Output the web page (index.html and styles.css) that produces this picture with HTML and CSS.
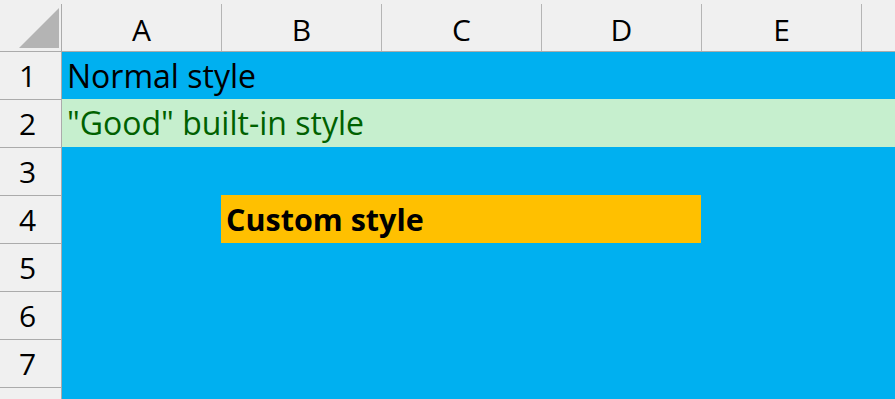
FILE: index.html
```html
<!DOCTYPE html>
<html lang="en">
<head>
<meta charset="utf-8">
<title>Cell styles</title>
<link rel="stylesheet" href="styles.css">
</head>
<body>
<div class="sheet">
  <div class="head">
    <div class="corner">
      <svg class="corner-tri" width="40" height="40" viewBox="0 0 40 40"><polygon points="40,0 40,40 0,40" fill="#b4b4b4"/></svg>
    </div>
    <div class="col">A</div>
    <div class="col">B</div>
    <div class="col">C</div>
    <div class="col">D</div>
    <div class="col">E</div>
    <div class="col col-rest"></div>
  </div>
  <div class="body">
    <div class="rownums">
      <div class="rn">1</div>
      <div class="rn">2</div>
      <div class="rn">3</div>
      <div class="rn">4</div>
      <div class="rn">5</div>
      <div class="rn">6</div>
      <div class="rn">7</div>
      <div class="rn"></div>
    </div>
    <div class="cells">
      <div class="row row-first"><span class="txt">Normal style</span></div>
      <div class="row row-good"><span class="txt">"Good" built-in style</span></div>
      <div class="row"></div>
      <div class="row"><div class="custom"><span class="txt">Custom style</span></div></div>
      <div class="row"></div>
      <div class="row"></div>
      <div class="row"></div>
      <div class="row"></div>
    </div>
  </div>
</div>
</body>
</html>
```

FILE: styles.css
```css
* { box-sizing: border-box; }
html, body {
  margin: 0;
  padding: 0;
  background: #f0f0f0;
  overflow: hidden;
}
.sheet {
  width: 895px;
  height: 399px;
  overflow: hidden;
  font-family: "Open Sans", "Liberation Sans", sans-serif;
  color: #000;
}
.head {
  display: flex;
  height: 52px;
  padding-top: 4px;
  border-bottom: 1px solid #ababab;
  background: #f0f0f0;
}
.corner {
  flex: 0 0 62px;
  height: 47px;
  border-right: 1px solid #ababab;
  display: flex;
  justify-content: flex-end;
  align-items: flex-end;
  padding: 0 2px 3px 0;
}
.corner-tri { display: block; }
.col {
  flex: 0 0 160px;
  height: 47px;
  border-right: 1px solid #b5b5b5;
  display: flex;
  justify-content: center;
  align-items: flex-end;
  font-size: 30px;
  line-height: 30px;
  padding-bottom: 6px;
}
.col-rest { flex: 1 0 40px; border-right: none; }
.body {
  display: flex;
}
.rownums {
  flex: 0 0 62px;
  border-right: 1px solid #ababab;
  background: #f0f0f0;
}
.rn {
  height: 48px;
  border-bottom: 1px solid #ababab;
  display: flex;
  justify-content: center;
  align-items: flex-end;
  padding-right: 6px;
  padding-bottom: 8px;
  font-size: 30px;
  line-height: 30px;
}
.cells {
  flex: 1 1 auto;
  background: #00b0f0;
}
.row {
  height: 48px;
  display: flex;
  align-items: flex-end;
  padding-left: 5px;
  padding-bottom: 8px;
  font-size: 32px;
  line-height: 32px;
  white-space: nowrap;
}
.row-first { height: 47px; padding-bottom: 7px; }
.row-good {
  background: #c6efce;
  color: #006100;
}
.custom {
  margin-left: 154px;
  margin-bottom: -8px;
  width: 480px;
  height: 48px;
  background: #ffc000;
  display: flex;
  align-items: flex-end;
  padding-left: 5px;
  padding-bottom: 9px;
  font-weight: 700;
  font-size: 30.5px;
  line-height: 30.5px;
}
```
